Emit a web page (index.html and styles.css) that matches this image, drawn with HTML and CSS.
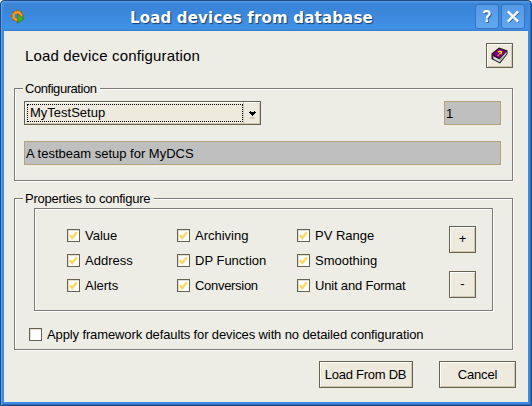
FILE: index.html
```
<!DOCTYPE html>
<html lang="en">
<head>
<meta charset="utf-8">
<title>Load devices from database</title>
<link rel="stylesheet" href="styles.css">
</head>
<body>
<svg width="0" height="0" class="defs">
  <symbol id="tick" viewBox="0 0 9 9"><path d="M.8 4.2L3.3 7L7.8 1.2" fill="none" stroke="#ffd966" stroke-width="2.5"/></symbol>
</svg>
<div class="window">
  <header class="titlebar">
    <svg class="app-icon" width="14" height="15" viewBox="0 0 14 15">
      <path d="M6.3 .5v13M0 7h12.6M1.8 2.5l9 9M10.8 2.5l-9 9" stroke="#9c5f1c" stroke-width="2.6"/>
      <circle cx="6.3" cy="7" r="3.7" fill="#3b86da" stroke="#f39a25" stroke-width="2.8"/>
      <circle cx="6.3" cy="7" r="2.2" fill="none" stroke="#8f5a28" stroke-width=".6"/>
      <path d="M6.8 5.2l6.2 4.4-6.2 4.6z" fill="#38b52a" stroke="#287929" stroke-width=".7"/>
    </svg>
    <h1>Load devices from database</h1>
    <div class="controls">
      <button class="control" aria-label="Help"><svg width="22" height="23" viewBox="0 0 22 23"><g transform="translate(1 1)" fill="none" stroke="#2a63a8" stroke-width="2.2"><path d="M7.8 8.2C8.2 5.4 13.6 5.4 13.6 8.4C13.6 11 10.8 10.4 10.8 13.4M10.8 14.6v2.4"/></g><path d="M7.8 8.2C8.2 5.4 13.6 5.4 13.6 8.4C13.6 11 10.8 10.4 10.8 13.4M10.8 14.6v2.4" fill="none" stroke="#fff" stroke-width="2.3"/></svg></button>
      <button class="control" aria-label="Close"><svg width="22" height="23" viewBox="0 0 22 23"><path d="M6.8 7.3l10 10M16.8 7.3l-10 10" stroke="#2a63a8" stroke-width="2.2"/><path d="M5.8 6.3l10.4 10.4M16.2 6.3l-10.4 10.4" stroke="#fff" stroke-width="2.4"/></svg></button>
    </div>
  </header>
  <main class="content">
    <div class="heading">
      <h2>Load device configuration</h2>
      <button class="button help" aria-label="Help"><svg width="17" height="17" viewBox="0 0 17 17">
        <path d="M.5 6.5L8 .5l8.5 3v3.5l-7.5 9.5-8.5-4.5z" fill="#111"/>
        <path d="M2 9l6.5 3.5 7-8v2.5l-6.8 8.2L2 11.5z" fill="#ddd"/>
        <path d="M3 12.5l5.5 2.6M9 13.4l6-7.5" stroke="#888" stroke-width=".7"/>
        <path d="M1.8 6.8L8 1.6l7.2 2.6-6.7 7.3z" fill="#850080"/>
        <path d="M1.8 7v4.5" stroke="#850080" stroke-width="1.2"/>
        <path d="M7 5.2l1.5-1 2 .6-.4 1.6-1.8.5M7.6 8.2l-1 .2" fill="none" stroke="#ffe800" stroke-width="1.4"/>
      </svg></button>
    </div>
    <section class="group configuration">
      <h3 class="legend t-conf">Configuration</h3>
      <div class="row">
        <div class="combo"><div class="value">MyTestSetup</div><div class="arrow"><svg width="9" height="10" viewBox="0 0 9 10" shape-rendering="crispEdges"><path d="M2 1h1v1h3v-1h1v1h1v1h-1v1h-1v1h-1v1h-1v-1h-1v-1h-1v-1h-1v-1h1z" fill="#000"/><path d="M2 7h5v2h-5z" fill="#d2c9b2"/></svg></div></div>
        <div class="field number">1</div>
      </div>
      <div class="field">A testbeam setup for MyDCS</div>
    </section>
    <section class="group properties">
      <h3 class="legend t-prop">Properties to configure</h3>
      <div class="group inner">
        <div class="options">
          <label class="check"><i><svg><use href="#tick"/></svg></i><span>Value</span></label>
          <label class="check"><i><svg><use href="#tick"/></svg></i><span>Archiving</span></label>
          <label class="check"><i><svg><use href="#tick"/></svg></i><span>PV Range</span></label>
          <label class="check"><i><svg><use href="#tick"/></svg></i><span>Address</span></label>
          <label class="check"><i><svg><use href="#tick"/></svg></i><span>DP Function</span></label>
          <label class="check"><i><svg><use href="#tick"/></svg></i><span>Smoothing</span></label>
          <label class="check"><i><svg><use href="#tick"/></svg></i><span>Alerts</span></label>
          <label class="check"><i><svg><use href="#tick"/></svg></i><span class="t-conv">Conversion</span></label>
          <label class="check"><i><svg><use href="#tick"/></svg></i><span class="t-unit">Unit and Format</span></label>
        </div>
        <div class="steps"><button class="button">+</button><button class="button">-</button></div>
      </div>
      <label class="check defaults"><i></i><span>Apply framework defaults for devices with no detailed configuration</span></label>
    </section>
    <footer class="actions">
      <button class="button load">Load From DB</button>
      <button class="button cancel">Cancel</button>
    </footer>
  </main>
</div>
</body>
</html>
```

FILE: styles.css
```
* { box-sizing: border-box; }
body { margin: 0; background: #fff; font: 13px/15px "Liberation Sans", Arial, sans-serif; color: #000; }
h1, h2, h3 { margin: 0; font-weight: normal; }
button { margin: 0; padding: 0; font: inherit; color: inherit; }
svg { display: block; flex: none; }
.defs { position: absolute; }
.window {
  width: 532px; height: 406px; padding: 0 3px 3px;
  border: 1px solid #21497c; border-radius: 4px 4px 0 0;
  background: #3c8be3; box-shadow: inset 1px 1px #5ca4ef, inset -1px -1px #286cb7;
}
.titlebar {
  height: 30px; display: flex; align-items: flex-start; padding-left: 7px;
  background: linear-gradient(#5ca4ef 0, #3b85d8 2px, #3985d8 9px, #4191e9 28px, #3779c4 30px);
}
.app-icon { margin-top: 8px; }
.titlebar h1 {
  flex: none; margin: 8px 0 0 105px; width: 345px; white-space: nowrap;
  font: bold 15px/19px "DejaVu Sans", sans-serif; letter-spacing: .18px; color: #fff; text-shadow: 1px 1px 1px #183e70;
}
.controls { display: flex; flex: none; gap: 2px; margin-top: 3px; }
.control { flex: none; width: 24px; height: 25px; border: 1px solid #3475c3; border-radius: 3px; background: linear-gradient(#5399e6, #62a7ef); }
.content { height: 371px; padding: 12px 0 0 10px; background: #eeede5; }
.heading { display: flex; justify-content: space-between; width: 499px; height: 25px; padding-left: 11px; }
.heading h2 { font-size: 15px; line-height: 26px; letter-spacing: .16px; }
.button {
  display: flex; align-items: center; justify-content: center; white-space: nowrap;
  border: 1px solid #66624f; background: #eeeade;
  box-shadow: inset 1px 1px #fff, inset -1px -1px #d0c8b0;
}
.help { width: 27px; height: 25px; }
.group { width: 499px; border: 1px solid #7c7b75; box-shadow: 1px 1px #fff, inset 1px 1px #fff; }
.legend { height: 15px; margin: -8px 0 0 8px; padding: 0 0 0 2px; font-size: 13px; line-height: 15px; white-space: nowrap; background: #eeede5; }
.t-conf { width: 77px; letter-spacing: -.45px; }
.t-prop { width: 131px; letter-spacing: -.24px; }
.configuration { height: 93px; margin-top: 20px; }
.row { display: flex; justify-content: space-between; width: 477px; margin: 5px 0 16px 9px; }
.combo { display: flex; width: 237px; height: 24px; border: 1px solid #66624f; background: #eeeade; box-shadow: inset 1px 1px #fff, inset -1px -1px #d0c8b0; }
.value { width: 216px; height: 18px; margin: 2px 0 0 2px; padding-left: 2px; border: 1px dotted #000; line-height: 15px; }
.arrow { flex: 1; height: 22px; padding: 8px 0 0 4px; border-left: 1px solid #d0c8b0; }
.field { width: 477px; height: 24px; margin-left: 9px; padding-left: 1px; line-height: 24px; border: 1px solid #b3a27b; background: #bfbfbf; }
.number { width: 57px; margin: 0; padding-left: 1px; }
.properties { height: 152px; margin-top: 17px; }
.inner { display: flex; width: 459px; height: 103px; margin: 2px 0 0 19px; }
.options { display: grid; grid-template-columns: 110px 120px 152px; grid-auto-rows: 13px; row-gap: 12px; margin: 20px 0 0 32px; }
.check { display: flex; height: 13px; gap: 5px; line-height: 14px; white-space: nowrap; }
.check i { width: 13px; height: 13px; border: 1px solid #66624f; background: #fff; box-shadow: inset 1px 1px #e3ded2; padding: 1px; }
.check svg { width: 9px; height: 9px; }
.t-unit { letter-spacing: -.18px; }
.t-conv { letter-spacing: -.3px; }
.steps { display: flex; flex-direction: column; gap: 18px; margin-top: 17px; }
.steps .button { width: 27px; height: 27px; padding-bottom: 2px; }
.defaults { margin: 17px 0 0 14px; letter-spacing: -.12px; }
.actions { display: flex; gap: 26px; margin: 11px 0 0 305px; }
.actions .button { height: 27px; }
.load { width: 94px; padding-right: 1px; letter-spacing: -.25px; }
.cancel { width: 77px; letter-spacing: -.15px; }
```
